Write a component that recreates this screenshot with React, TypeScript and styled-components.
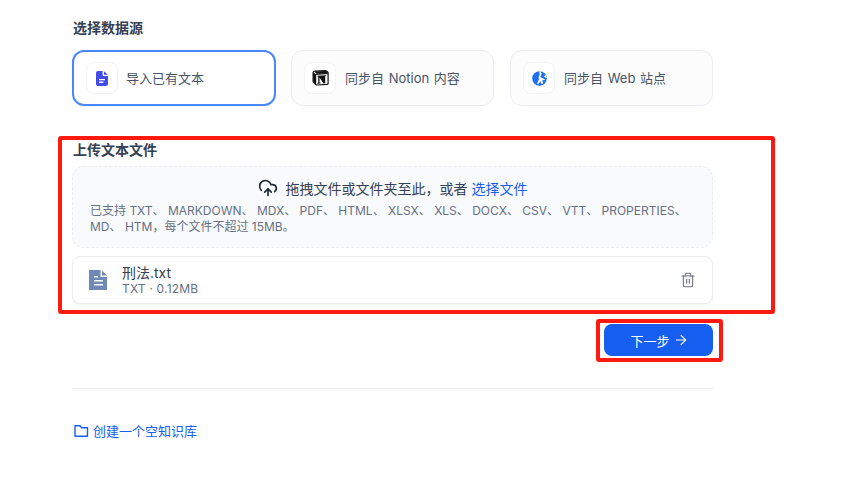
import React from 'react';
import styled, { createGlobalStyle } from 'styled-components';
import { ArrowRight, CloudUpload, Trash2 } from 'lucide-react';

const GlobalStyle = createGlobalStyle`
  html, body {
    margin: 0;
    padding: 0;
    background: #fff;
    font-family: Inter, "Noto Sans CJK SC", sans-serif;
    overflow: hidden;
  }
`;

type SourceType = {
    label: string
    icon: React.ReactNode
    active?: boolean
}

const TextGlyph = () => (
    <svg width="12" height="15" viewBox="0 0 12 15">
        <path fill="#444ce7" d="M2 0h4.600v3.400c0 .9.7 1.600 1.600 1.600H12v8a2 2 0 0 1-2 2H2a2 2 0 0 1-2-2V2a2 2 0 0 1 2-2z" />
        <path fill="#444ce7" d="M8 .3 11.800 3.800H8z" />
        <path fill="#fff" d="M3 8h6v1.300H3zM3 10.600h4.400v1.300H3z" />
    </svg>
);

const NotionGlyph = () => (
    <svg width="17" height="16" viewBox="0 0 17 16">
        <path fill="#fff" stroke="#111" strokeWidth="1.200" d="M3 1.200 13.200.6c.6 0 .8.1 1.200.4l1.300 1c.3.2.4.4.4.7v10.700c0 .6-.2.9-.9 1l-10.200.6c-.5 0-.8 0-1.100-.4L1.500 12.400c-.3-.4-.4-.7-.4-1.100V2.300c0-.5.3-1 1.900-1.100z" />
        <path fill="#111" d="M1.100 2.200 4.200 4.400v10.600L1.700 12c-.3-.4-.6-.7-.6-1.100zM4.200 3.800l11.900-.8v1L4.200 4.900zM2.600 1.500 14 .9l1.800 2L4 3.600z" />
        <path fill="#111" d="M5.300 5.800 14.300 5.300v.7l-1.100.2v7.100l-1.700.1-4-6v5.100l1.200.3v.7l-3.400.2v-.7l.9-.2V6.800l-.9-.2z" />
    </svg>
);

const WebGlyph = () => (
    <svg width="15" height="15" viewBox="0 0 15 15">
        <circle cx="7.500" cy="7.500" r="7.300" fill="#1f6ff0" />
        <path fill="#fff" d="M7.300.2h1.300l1 2.800L8.300 5.900l5 2.700-3 .8.800 3.100-1.400.6-1.400-2.800-1.900 3-1.300-1 1.800-3.800-.3-2.700 1-1.700zM14.800 7.200l-3-1.700L13.800 4z" />
    </svg>
);

const FileGlyph = () => (
    <svg width="18" height="20" viewBox="0 0 18 20">
        <path fill="#6f8ab7" d="M0 0h11.500v7H18v13H0z" />
        <path fill="#6f8ab7" d="M13 .4 18 5.500h-5z" />
        <path fill="#fff" d="M5 6h4v1.400H5zM5 10h9v1.400H5zM5 14h9v1.400H5z" />
    </svg>
);

const FolderGlyph = () => (
    <svg width="15" height="14" viewBox="0 0 15 14" fill="none" stroke="currentColor" strokeWidth="1.400">
        <path d="M1 1.700h5l1.400 2h6.100v8.600H1z" strokeLinejoin="round" />
    </svg>
);

const sources: SourceType[] = [
    {label: '导入已有文本', icon: <TextGlyph />, active: true},
    {label: '同步自 Notion 内容', icon: <NotionGlyph />},
    {label: '同步自 Web 站点', icon: <WebGlyph />},
];

const App = () => (
    <Page>
        <GlobalStyle />
        <Heading>选择数据源</Heading>
        <SourceGrid>
            {sources.map((source) => (
                <SourceCard key={source.label} $active={source.active}>
                    <IconTile>{source.icon}</IconTile>
                    <SourceLabel>{source.label}</SourceLabel>
                </SourceCard>
            ))}
        </SourceGrid>

        <UploadHeading>上传文本文件</UploadHeading>
        <DropZone>
            <DropTitle>
                <CloudUpload size={20} strokeWidth={2} color="#1f2937" />
                <span>拖拽文件或文件夹至此，或者 <Accent>选择文件</Accent></span>
            </DropTitle>
            <DropHint>
                已支持 TXT、 MARKDOWN、 MDX、 PDF、 HTML、 XLSX、 XLS、 DOCX、 CSV、 VTT、 PROPERTIES、 MD、 HTM，每个文件不超过 15MB。
            </DropHint>
        </DropZone>
        <FileRow>
            <FileIcon><FileGlyph /></FileIcon>
            <FileInfo>
                <FileName>刑法.txt</FileName>
                <FileMeta>TXT · 0.12MB</FileMeta>
            </FileInfo>
            <Trash2 size={16} strokeWidth={1.6} color="#667085" />
        </FileRow>

        <Actions>
            <NextButton>下一步<ArrowRight size={16} strokeWidth={1.6} /></NextButton>
        </Actions>

        <Divider />

        <EmptyLink>
            <FolderGlyph />
            创建一个空知识库
        </EmptyLink>

        <Annotation $left={58} $top={136} $width={717} $height={178} />
        <Annotation $left={596} $top={319} $width={127} $height={43} />
    </Page>
);

const Page = styled.div`
  position: relative;
  box-sizing: border-box;
  width: 851px;
  height: 481px;
  padding: 19px 0 0 72px;
  background: #fff;
`;

const Heading = styled.div`
  width: 640px;
  height: 18px;
  padding-left: 1px;
  font-size: 14px;
  line-height: 18px;
  font-weight: 600;
  color: #344054;
`;

const SourceGrid = styled.div`
  display: grid;
  grid-template-columns: repeat(3, 1fr);
  gap: 16px;
  width: 641px;
  margin-top: 13px;
`;

const SourceCard = styled.div<{$active?: boolean}>`
  box-sizing: border-box;
  display: flex;
  align-items: center;
  gap: ${({$active}) => ($active ? '8px' : '9px')};
  height: 56px;
  margin-right: ${({$active}) => ($active ? '-1px' : '0')};
  padding-left: 12px;
  border: ${({$active}) => ($active ? '2px solid #4a86ff' : '1px solid #eaecf0')};
  border-radius: 12px;
  background: ${({$active}) => ($active ? '#fff' : '#fcfcfd')};
  font-size: 13px;
  word-spacing: 1px;
  color: #475467;
`;

const SourceLabel = styled.span`
  padding-bottom: 2px;
`;

const IconTile = styled.div`
  box-sizing: border-box;
  display: flex;
  align-items: center;
  justify-content: center;
  width: 32px;
  height: 32px;
  border: 1px solid #f2f4f7;
  border-radius: 8px;
  background: #fff;
  flex-shrink: 0;
`;

const UploadHeading = styled(Heading)`
  margin-top: 35px;
`;

const DropZone = styled.div`
  box-sizing: border-box;
  width: 641px;
  height: 82px;
  margin-top: 7px;
  padding: 11px 17px 0;
  border: 1px dashed #eaecf0;
  border-radius: 12px;
  background: #f9fafb;
`;

const DropTitle = styled.div`
  display: flex;
  align-items: center;
  justify-content: center;
  gap: 8px;
  height: 20px;
  font-size: 14px;
  color: #344054;
`;

const Accent = styled.span`
  color: #155eef;
`;

const DropHint = styled.div`
  margin-top: 5px;
  font-size: 12px;
  line-height: 16px;
  color: #667085;
`;

const FileRow = styled.div`
  box-sizing: border-box;
  display: flex;
  align-items: center;
  width: 641px;
  height: 48px;
  margin-top: 8px;
  padding: 0 16px;
  border: 1px solid #eaecf0;
  border-radius: 8px;
  background: #fff;
  box-shadow: 0 1px 2px rgba(16, 24, 40, 0.05);
`;

const FileIcon = styled.div`
  display: flex;
  width: 18px;
  margin-right: 15px;
`;

const FileInfo = styled.div`
  flex: 1;
`;

const FileName = styled.div`
  padding-bottom: 1px;
  font-size: 14px;
  line-height: 16px;
  color: #344054;
`;

const FileMeta = styled.div`
  font-size: 12px;
  line-height: 14px;
  letter-spacing: 0.2px;
  color: #667085;
`;

const Actions = styled.div`
  display: flex;
  justify-content: flex-end;
  width: 641px;
  margin-top: 20px;
`;

const NextButton = styled.button`
  display: flex;
  align-items: center;
  justify-content: center;
  gap: 3px;
  width: 109px;
  height: 32px;
  padding: 0 0 0 2px;
  border: none;
  border-radius: 8px;
  background: #155eef;
  font-family: inherit;
  font-size: 13px;
  font-weight: 400;
  color: #fff;
`;

const Divider = styled.div`
  width: 641px;
  height: 1px;
  margin-top: 32px;
  background: #eaecf0;
`;

const EmptyLink = styled.div`
  display: flex;
  align-items: center;
  gap: 4px;
  margin: 33px 0 0 1px;
  height: 18px;
  padding-left: 1px;
  font-size: 13px;
  line-height: 18px;
  color: #155eef;
`;

const Annotation = styled.div<{$left: number, $top: number, $width: number, $height: number}>`
  position: absolute;
  box-sizing: border-box;
  left: ${({$left}) => $left}px;
  top: ${({$top}) => $top}px;
  width: ${({$width}) => $width}px;
  height: ${({$height}) => $height}px;
  border: 4px solid #ff1a0f;
  border-radius: 3px;
  pointer-events: none;
`;

export default App;
